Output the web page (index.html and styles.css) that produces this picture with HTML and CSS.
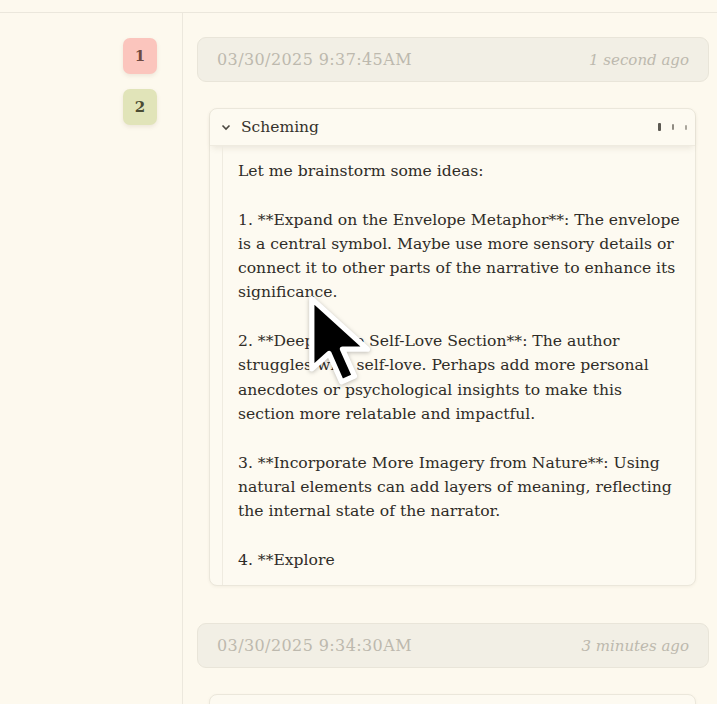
FILE: index.html
```html
<!DOCTYPE html>
<html>
<head>
<meta charset="utf-8">
<link rel="stylesheet" href="styles.css">
</head>
<body>
<div class="topbar"></div>
<div class="main">
  <aside class="gutter">
    <div class="badge badge-red">1</div>
    <div class="badge badge-green">2</div>
  </aside>
  <section class="thread">
    <div class="stamp">
      <span class="stamp-date">03/30/2025 9:37:45AM</span>
      <span class="stamp-ago">1 second ago</span>
    </div>
    <div class="card">
      <div class="card-head">
        <svg class="chev" width="10" height="8" viewBox="0 0 10 8"><path d="M1.5 2.5 L5 6 L8.5 2.5" fill="none" stroke="#4a4740" stroke-width="1.6"/></svg>
        <span class="card-title">Scheming</span>
        <span class="loader"><i class="b1"></i><i class="b2"></i><i class="b3"></i></span>
      </div>
      <div class="card-body">
        <div class="card-text">Let me brainstorm some ideas:

1. **Expand on the Envelope Metaphor**: The envelope
is a central symbol. Maybe use more sensory details or
connect it to other parts of the narrative to enhance its
significance.

2. **Deepen the Self-Love Section**: The author
struggles with self-love. Perhaps add more personal
anecdotes or psychological insights to make this
section more relatable and impactful.

3. **Incorporate More Imagery from Nature**: Using
natural elements can add layers of meaning, reflecting
the internal state of the narrator.

4. **Explore</div>
      </div>
    </div>
    <div class="stamp stamp-2">
      <span class="stamp-date">03/30/2025 9:34:30AM</span>
      <span class="stamp-ago">3 minutes ago</span>
    </div>
    <div class="card card-next"></div>
  </section>
</div>
<svg class="cursor" width="70" height="96" viewBox="0 0 14.6 20"><path d="M1 1 L1 15.6 L4.6 12.4 L7.2 18.3 L9.9 17.1 L7.4 11.5 L12.6 11.5 Z" fill="#000" stroke="#fff" stroke-width="1.1" stroke-linejoin="round"/></svg>
</body>
</html>
```

FILE: styles.css
```css
html, body {
  margin: 0;
  padding: 0;
  background: #fdf9ee;
  font-family: "DejaVu Serif", "Liberation Serif", serif;
  color: #3d3a34;
  overflow: hidden;
  height: 704px;
}
.topbar {
  height: 12px;
  border-bottom: 1px solid #ebe7dc;
}
.main {
  display: flex;
  height: 700px;
}
.gutter {
  width: 183px;
  flex: 0 0 183px;
  border-right: 1px solid #ece8dd;
  display: flex;
  flex-direction: column;
  align-items: flex-end;
  padding: 25px 25px 0 0;
  box-sizing: border-box;
  gap: 15px;
}
.badge {
  width: 34px;
  height: 36px;
  border-radius: 7px;
  display: flex;
  align-items: center;
  justify-content: center;
  font-size: 15px;
  font-weight: bold;
  box-shadow: 0 2px 4px rgba(120, 100, 70, 0.12);
}
.badge-red {
  background: #fbc5bd;
  color: #6e4a42;
}
.badge-green {
  background: #e1e4b9;
  color: #4a4b33;
}
.thread {
  flex: 1;
  padding: 24px 8px 0 14px;
  display: flex;
  flex-direction: column;
}
.thread > * {
  flex-shrink: 0;
}
.stamp {
  height: 45px;
  box-sizing: border-box;
  background: #f2efe5;
  border: 1px solid #e9e5d9;
  border-radius: 9px;
  display: flex;
  align-items: center;
  justify-content: space-between;
  padding: 0 19px 0 19px;
  color: #bdb9ae;
}
.stamp-date {
  font-size: 16px;
  letter-spacing: 0.4px;
}
.stamp-ago {
  font-style: italic;
  font-size: 15px;
}
.stamp-2 {
  margin-top: 37px;
}
.card {
  margin: 26px 13px 0 12px;
  background: #fdfaf1;
  border: 1px solid #ebe7db;
  border-radius: 8px;
  box-shadow: 0 1px 3px rgba(120, 100, 70, 0.07);
}
.card-head {
  height: 36px;
  display: flex;
  align-items: center;
  padding: 0 8px 0 11px;
  gap: 10px;
  box-shadow: 0 4px 6px -2px rgba(110, 95, 70, 0.13);
  border-bottom: 1px solid #efebe0;
}
.chev {
  flex: 0 0 auto;
}
.card-title {
  font-size: 15.5px;
  color: #35322c;
  flex: 1;
}
.loader {
  display: flex;
  align-items: center;
  gap: 11px;
}
.loader i {
  display: block;
  width: 3px;
  border-radius: 1px;
}
.loader .b1 { height: 8px; background: #5c5952; }
.loader .b2 { height: 6px; background: #8f8b82; width: 2px; }
.loader .b3 { height: 5px; background: #aaa69c; width: 2px; }
.card-body {
  margin-left: 12px;
  border-left: 1px solid #efebe0;
  padding: 13px 10px 13px 15px;
}
.card-text {
  white-space: pre;
  font-size: 15.6px;
  line-height: 24.3px;
  color: #2f2c27;
}
.card-next {
  height: 40px;
}
.cursor {
  position: absolute;
  left: 307px;
  top: 294px;
  filter: drop-shadow(0 1px 2px rgba(0, 0, 0, 0.25));
}
```
